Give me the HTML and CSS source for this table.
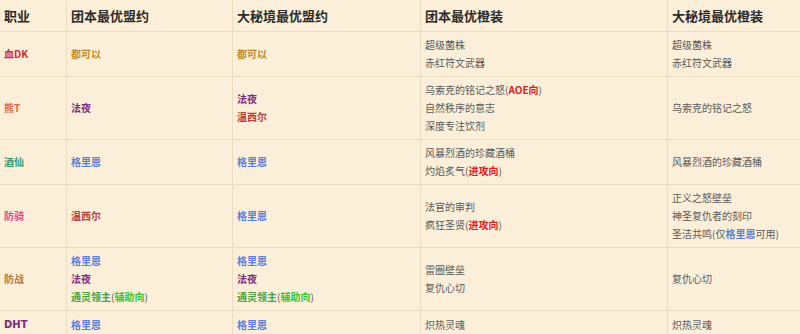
FILE: index.html
```html
<!DOCTYPE html>
<html lang="zh-CN">
<head>
<meta charset="utf-8">
<link rel="stylesheet" href="styles.css">
</head>
<body>
<table class="tbl">
  <colgroup>
    <col class="c1"><col class="c2"><col class="c3"><col class="c4"><col class="c5">
  </colgroup>
  <thead>
    <tr><th>职业</th><th>团本最优盟约</th><th>大秘境最优盟约</th><th>团本最优橙装</th><th>大秘境最优橙装</th></tr>
  </thead>
  <tbody>
    <tr>
      <td><b class="dk">血DK</b></td>
      <td><b class="any">都可以</b></td>
      <td><b class="any">都可以</b></td>
      <td class="gear">超级菌株<br>赤红符文武器</td>
      <td class="gear">超级菌株<br>赤红符文武器</td>
    </tr>
    <tr>
      <td><span class="druid">熊T</span></td>
      <td><b class="fae">法夜</b></td>
      <td><b class="fae">法夜</b><br><b class="ven">温西尔</b></td>
      <td class="gear">乌索克的铭记之怒(<b class="hl">AOE向</b>)<br>自然秩序的意志<br>深度专注饮剂</td>
      <td class="gear">乌索克的铭记之怒</td>
    </tr>
    <tr>
      <td><b class="monk">酒仙</b></td>
      <td><b class="kyr">格里恩</b></td>
      <td><b class="kyr">格里恩</b></td>
      <td class="gear">风暴烈酒的珍藏酒桶<br>灼焰炙气(<b class="hl">进攻向</b>)</td>
      <td class="gear">风暴烈酒的珍藏酒桶</td>
    </tr>
    <tr>
      <td><span class="pal">防骑</span></td>
      <td><b class="ven">温西尔</b></td>
      <td><b class="kyr">格里恩</b></td>
      <td class="gear">法官的审判<br>疯狂圣贤(<b class="hl">进攻向</b>)</td>
      <td class="gear">正义之怒壁垒<br>神圣复仇者的刻印<br>圣洁共鸣(仅<b class="kyr">格里恩</b>可用)</td>
    </tr>
    <tr>
      <td><span class="war">防战</span></td>
      <td><b class="kyr">格里恩</b><br><b class="fae">法夜</b><br><b class="nec">通灵领主</b>(<b class="sup">辅助向</b>)</td>
      <td><b class="kyr">格里恩</b><br><b class="fae">法夜</b><br><b class="nec">通灵领主</b>(<b class="sup">辅助向</b>)</td>
      <td class="gear">雷圈壁垒<br>复仇心切</td>
      <td class="gear">复仇心切</td>
    </tr>
    <tr>
      <td><b class="dh">DHT</b></td>
      <td><b class="kyr">格里恩</b></td>
      <td><b class="kyr">格里恩</b></td>
      <td class="gear">炽热灵魂</td>
      <td class="gear">炽热灵魂</td>
    </tr>
  </tbody>
</table>
</body>
</html>
```

FILE: styles.css
```css
html, body {
  margin: 0;
  padding: 0;
  background: #fbefd9;
}
body {
  font-family: "Noto Sans CJK SC", "Noto Sans", sans-serif;
  color: #5a5a5a;
  overflow: hidden;
}
.tbl {
  border-collapse: collapse;
  table-layout: fixed;
  width: 802px;
  margin: -1px 0 0 -1px;
  background: #fbefd9;
}
.c1 { width: 67px; }
.c2 { width: 166px; }
.c3 { width: 188px; }
.c4 { width: 247px; }
.c5 { width: 134px; }
.tbl th, .tbl td {
  border: 1px solid #ecdcc0;
  padding: 4px;
  text-align: left;
  vertical-align: middle;
}
.tbl th {
  font-size: 13px;
  font-weight: 700;
  color: #2b2b2b;
  line-height: 23px;
}
.tbl td {
  font-size: 10px;
  line-height: 18px;
}
.tbl td b { font-weight: 700; }
.gear { color: #5a5a5a; }
.dk { color: #d42a2a; }
.druid { color: #e6653c; font-weight: 600; }
.monk { color: #2f9a6e; }
.pal { color: #e8468c; font-weight: 600; }
.war { color: #b07a42; font-weight: 600; }
.dh { color: #7e2a7c; font-family: "DejaVu Sans", sans-serif; font-size: 10px; }
.any { color: #c08a2a; }
.fae { color: #7b2a84; }
.ven { color: #b8403a; }
.kyr { color: #5a7fd8; }
.nec { color: #4aa040; }
.sup { color: #33c833; }
.hl { color: #e02020; }
```
